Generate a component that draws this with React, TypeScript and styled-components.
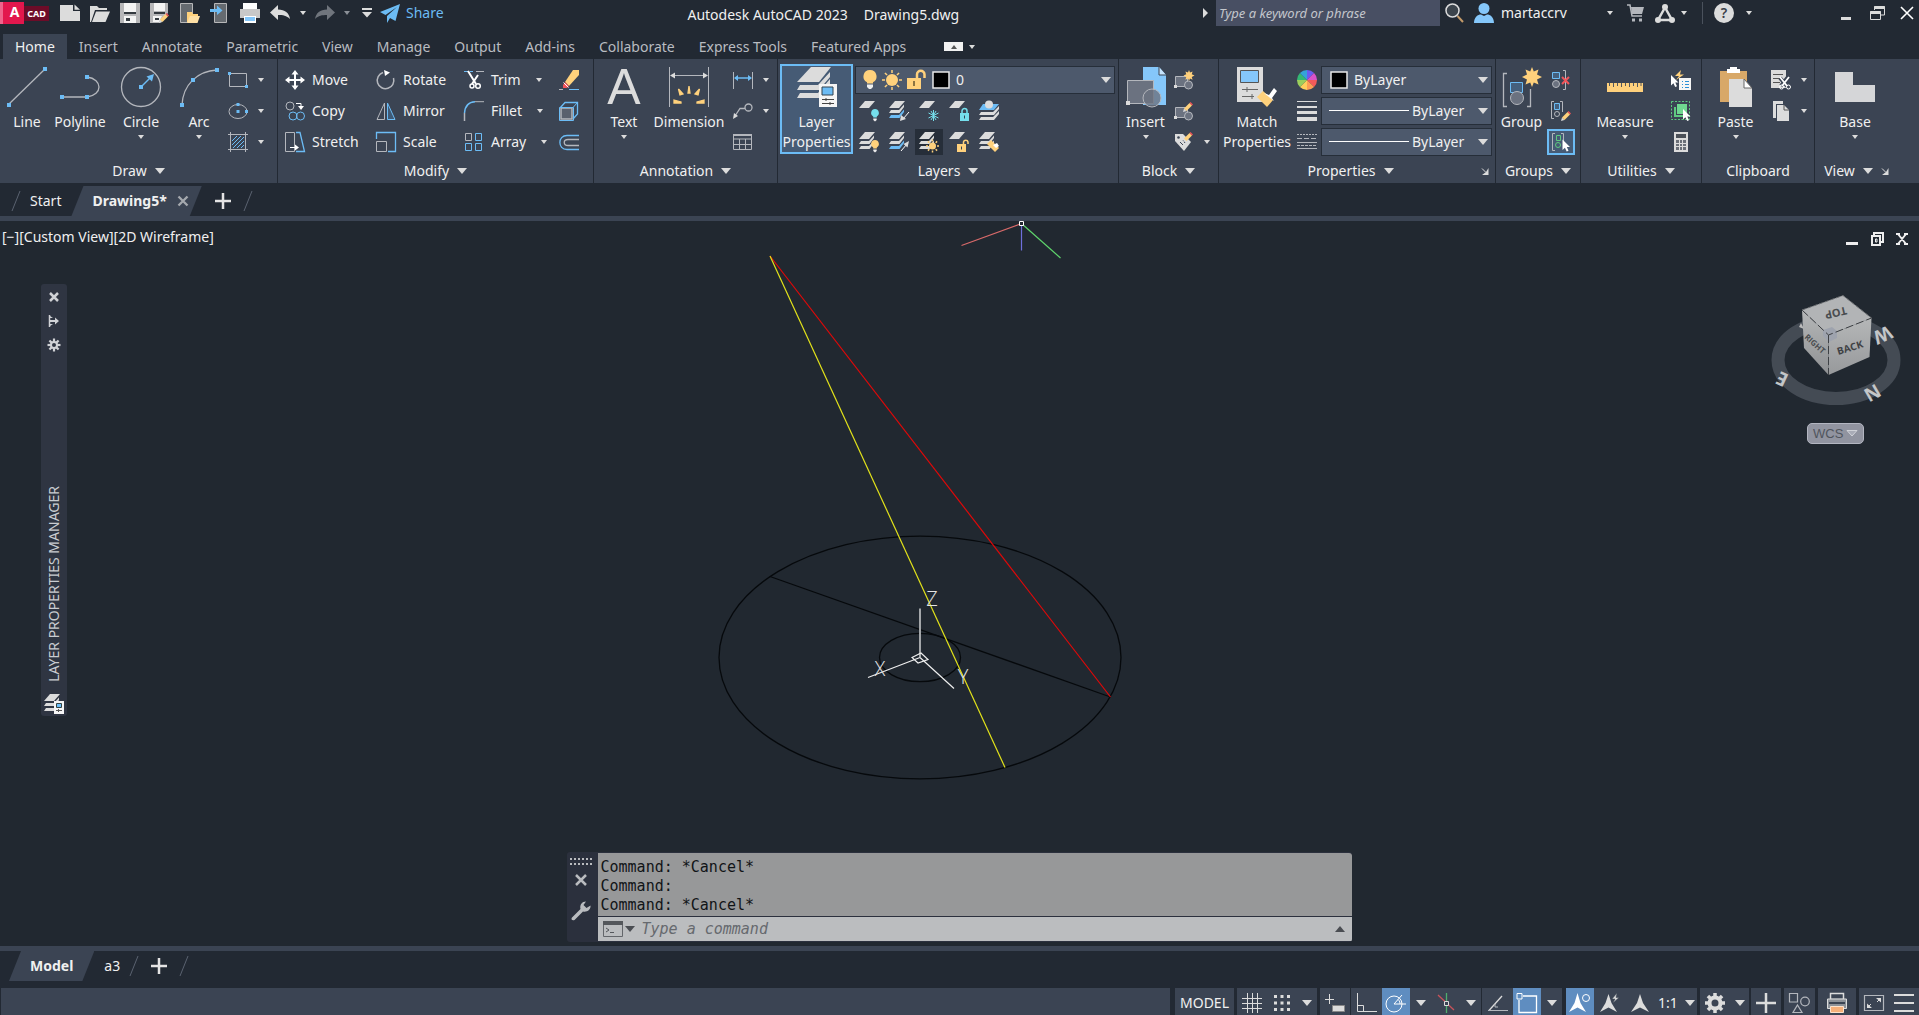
import React from 'react';
import styled, { createGlobalStyle, css } from 'styled-components';

const c = {
  bg: '#222933',
  canvas: '#212830',
  panel: '#3b4453',
  field: '#4d596c',
  text: '#f0f0f0',
  dim: '#b9bcc1',
  light: '#dcdcdc',
  line: '#b4b7bd',
  blue: '#6cbcf5',
  sky: '#85c7fa',
  yellow: '#ffd17c',
  cyan: '#75dfec',
  red: '#f0555a',
  green: '#5ecb80',
  orange: '#f7b07a',
  active: '#5f8dc0',
};

const GlobalStyle = createGlobalStyle`
  * { box-sizing: border-box; }
  body { margin: 0; background: ${c.bg}; }
  body, button, input, select { font: 14px/20px "Noto Sans", "Open Sans", sans-serif; color: ${c.text}; }
  button { margin: 0; padding: 0; border: 0; background: none; cursor: pointer; white-space: nowrap; }
  svg { display: block; flex: none; overflow: visible; }
`;

/* ---------- icons ---------- */

const Sun = ({ x = 10, y = 10, r = 4, l = 7, w = 2 }) => (
  <g>
    <circle cx={x} cy={y} r={r} fill={c.yellow} />
    {[0, 45, 90, 135, 180, 225, 270, 315].map((a) => (
      <path key={a} d={`M${x} ${y - r - 1}V${y - l}`} stroke={c.yellow} strokeWidth={w} transform={`rotate(${a} ${x} ${y})`} />
    ))}
  </g>
);
const Star = ({ x = 0, y = 0, s = 1 }) => (
  <path
    transform={`translate(${x} ${y}) scale(${s})`}
    fill={c.yellow}
    d="M0-10L1.8-5.5 6.500-7.500 5-2.500 10 0 5 2.500 6.500 7.500 1.8 5.5 0 10-1.8 5.5-6.500 7.500-5 2.500-10 0-5-2.500-6.500-7.500-1.8-5.5Z"
  />
);
const Pencil = ({ x = 0, y = 0 }) => (
  <g transform={`translate(${x} ${y})`}>
    <path d="M0 10L1 6.500 3.500 9Z" fill={c.light} />
    <path d="M1 6.500L6.500 1 9 3.500 3.500 9Z" fill={c.yellow} />
    <path d="M6.500 1L7.500 0 10 2.500 9 3.500Z" fill={c.red} />
  </g>
);
const Cursor = ({ x = 0, y = 0 }) => (
  <path transform={`translate(${x} ${y})`} d="M0 0V10.500L2.400 8.300 4.200 12 6 11.200 4.300 7.600H7.500Z" fill="#fff" />
);
const Sheet = ({ x = 0, y = 0, f = c.light }) => (
  <path transform={`translate(${x} ${y})`} d="M6 0H16L10 7H0Z" fill={f} />
);
const Stack = ({ last = c.light }) => (
  <g>
    <path d="M6 0H16L10 7H0Z" fill={c.light} />
    <path d="M2 9H10L15 3.500V6L10.500 12H0Z" fill={c.light} />
    <path d="M2 14H10L15 8.500V11L10.500 17H0Z" fill={last} />
  </g>
);
const Bulb = ({ x = 0, y = 0, f = c.yellow }) => (
  <g transform={`translate(${x} ${y})`}>
    <path d="M4 0A4 4 0 0 1 5.800 7.500V8.500H2.200V7.500A4 4 0 0 1 4 0Z" fill={f} />
    <path d="M2.300 9.500H5.700V11L4 12.500 2.300 11Z" fill="#eee" />
  </g>
);
const Padlock = ({ x = 0, y = 0, f = c.cyan, open = false }) => (
  <g transform={`translate(${x} ${y})`}>
    <path d={open ? 'M6.500 5V3A2.300 2.300 0 0 1 11 3V5' : 'M2 5V3A2.500 2.500 0 0 1 7 3V5'} fill="none" stroke={f} strokeWidth="1.500" />
    <path d="M0 5H9V13H0Z" fill={f} />
    <path d="M4.500 7.500V10.500" stroke="#345" />
  </g>
);
const Handle = ({ p }: { p: number[][] }) => (
  <>
    {p.map(([x, y], i) => (
      <rect key={i} x={x - 2} y={y - 2} width="4" height="4" fill={c.blue} />
    ))}
  </>
);
const Block = () => (
  <g stroke={c.line} fill="#6b7280">
    <path d="M1.500 6.500H13.500V16.500H1.500Z" />
    <circle cx="14.500" cy="15" r="4" />
    <path d="M0 15H3V18H0Z" fill={c.light} stroke="none" />
  </g>
);

const S = (w: number, h: number, body: React.ReactNode) => () => (
  <svg width={w} height={h} viewBox={`0 0 ${w} ${h}`} fill="none" aria-hidden="true">
    {body}
  </svg>
);

const I = {
  fresh: S(20, 20, <path d="M0 2H13V8H20V18H0ZM14.500 1.500L20 6.800H14.500Z" fill={c.light} />),
  open: S(20, 20, <g fill={c.light}><path d="M0 19V3H7L9 5H17V7H5L1 19Z" /><path d="M6 8.500H20L15.500 19H2Z" /></g>),
  save: S(20, 20, <g><path d="M0 0H20V20H0Z" fill="#b7b7b9" /><path d="M4 0H16V9H4Z" fill="#f4f4f4" /><path d="M4 13H16V20H4Z" fill="#f4f4f4" /><path d="M4 9H16V11H4ZM6 15H10V18H6Z" fill="#33393f" /></g>),
  saveAs: S(20, 20, <g><path d="M0 0H18V10L10 20H0Z" fill="#b7b7b9" /><path d="M4 0H15V8H4Z" fill="#f4f4f4" /><path d="M3 13H12L9 19H3Z" fill="#f4f4f4" /><path d="M4 9H15V11H4ZM5 15H9V17H5Z" fill="#33393f" /><Pencil x={9} y={10} /></g>),
  mobileOpen: S(20, 20, <g><path d="M.500 .500H12.500V19.500H.500Z" fill="#656a70" stroke="#b7b7b9" /><path d="M7 9H12L13 11H18V19H7Z" fill={c.yellow} /><path d="M10 13H20L17.500 20H7Z" fill="#ffe0a5" /></g>),
  mobileSave: S(20, 20, <g><path d="M4.500 .500H16.500V19.500H4.500Z" fill="#656a70" stroke="#b7b7b9" /><path d="M0 6H7V2.500L12.500 7.500 7 12V9H0Z" fill={c.blue} /></g>),
  print: S(20, 20, <g><path d="M3 0H17V6H3Z" fill="#fff" /><path d="M0 6H20V15H0Z" fill="#c8c8c8" /><path d="M4 13H16V20H4Z" fill="#fff" /><path d="M5 14H15V18H5Z" fill={c.sky} /></g>),
  undo: S(20, 16, <path d="M8 0V4.500C15 4.500 19 8 20 14 16.500 10.500 13 10 8 10V15L0 7.500Z" fill={c.light} />),
  redo: S(20, 16, <path d="M12 0V4.500C5 4.500 1 8 0 14 3.500 10.500 7 10 12 10V15L20 7.500Z" fill="#70757d" />),
  qat: S(10, 10, <path d="M0 0H10V2H0ZM0 4H10L5 9.500Z" fill={c.light} />),
  plane: S(20, 19, <path d="M20 0L0 8 5.500 11 17 3 7 12 7 19 10 14 15.500 17Z" fill={c.blue} />),
  playR: S(5, 10, <path d="M0 0L5 5 0 10Z" fill={c.light} />),
  search: S(20, 20, <g><circle cx="7.500" cy="7.500" r="6.500" fill="#3c444c" stroke={c.light} strokeWidth="1.500" /><path d="M12.500 13L18 19" stroke="#c49a6a" strokeWidth="2" /></g>),
  user: S(20, 20, <g fill={c.sky}><circle cx="10" cy="5.500" r="5.500" /><path d="M0 20C0 14 4 11.500 7 11.500L10 13 13 11.500C16 11.500 20 14 20 20Z" /></g>),
  cart: S(17, 18, <g><path d="M0 1H3L5 12H15" stroke={c.line} strokeWidth="1.500" /><path d="M4 3H17L15 10H5Z" fill={c.line} /><path d="M5 14.500H8V17.500H5ZM12 14.500H15V17.500H12Z" fill={c.line} /></g>),
  autodesk: S(20, 19, <g><path d="M10 3.500L3 16H17Z" stroke={c.light} strokeWidth="2.500" /><circle cx="10" cy="3" r="3" fill={c.light} /><circle cx="3" cy="16" r="3" fill={c.light} /><circle cx="17" cy="16" r="3" fill={c.light} /></g>),
  minimize: S(14, 14, <path d="M2 11H12V14H2Z" fill={c.light} />),
  restore: S(16, 14, <g stroke={c.light}><path d="M4.500 4V.500H14.500V9H11" /><path d="M4.500 1.500H14.500" strokeWidth="3" /><path d="M.500 5.500H10.500V13.500H.500Z" /><path d="M.500 6.500H10.500" strokeWidth="3" /></g>),
  close: S(14, 14, <path d="M1 1L13 13M13 1L1 13" stroke="#fff" strokeWidth="1.600" />),

  line: S(40, 40, <g><path d="M1 38L38 2" stroke={c.line} strokeWidth="1.300" /><Handle p={[[2, 38], [38, 2]]} /></g>),
  polyline: S(40, 40, <g><path d="M2 30H27C43 28 43 12 27 10" stroke={c.line} strokeWidth="1.300" /><Handle p={[[2, 30], [27, 30], [27, 10]]} /></g>),
  circle: S(40, 40, <g><circle cx="20" cy="20" r="19.500" stroke={c.line} strokeWidth="1.300" /><path d="M20 20L31 9" stroke={c.blue} strokeWidth="1.500" /><path d="M33 7L25.500 9.500 31 14.500Z" fill={c.blue} /><Handle p={[[20, 20]]} /></g>),
  arc: S(40, 40, <g><path d="M3 38C4 18 18 4 38 3" stroke={c.line} strokeWidth="1.300" /><Handle p={[[3, 38], [14, 13], [38, 3]]} /></g>),
  rect: S(20, 20, <g><path d="M1.500 3.500H18.500V16.500H1.500Z" stroke={c.line} /><path d="M0 2H3V5H0ZM17 15H20V18H17Z" fill={c.blue} /></g>),
  ellipse: S(20, 20, <g><ellipse cx="10" cy="10.500" rx="9" ry="7" stroke={c.line} /><path d="M8.500 2H11.500V5H8.500ZM8.500 9H11.500V12H8.500ZM17 9H20V12H17Z" fill={c.blue} /></g>),
  hatch: S(20, 20, <g><path d="M2.500 0V20M17.500 0V20M0 2.500H20M0 17.500H20" stroke={c.line} /><path d="M4 9L9 4M4 13L13 4M5 16L16 5M9 16L16 9M13 16L16 13" stroke={c.blue} /></g>),

  move: S(20, 20, <path d="M10 0L13.500 4.500H11V9H15.500V6.500L20 10 15.500 13.500V11H11V15.500H13.500L10 20 6.500 15.500H9V11H4.500V13.500L0 10 4.500 6.500V9H9V4.500H6.500Z" fill="#fff" />),
  copy: S(20, 20, <g><circle cx="5" cy="5" r="4" stroke={c.line} /><path d="M11 2.500H16V5" stroke="#fff" /><path d="M13 5H19L16 9Z" fill="#fff" /><circle cx="8" cy="15" r="4" stroke={c.blue} /><circle cx="15.500" cy="15" r="4" stroke={c.blue} /></g>),
  stretch: S(20, 20, <g><path d="M.500 .500H9.500V19.500H.500Z" stroke={c.line} /><path d="M11 .500H15L19.500 19.500H11" stroke={c.blue} strokeWidth="1.300" /><path d="M5 15.500H11" stroke="#fff" /><path d="M10 12.500L14 15.500 10 18.500Z" fill="#fff" /></g>),
  rotate: S(20, 20, <g><path d="M7 2.500A8.300 8.300 0 1 0 17.500 8" stroke={c.line} strokeWidth="1.500" /><path d="M8 0L14 2.500 9 6Z" fill="#fff" /></g>),
  mirror: S(20, 20, <g><path d="M8.500 2V18.500H1Z" stroke={c.line} /><path d="M11.500 2V18.500H19Z" stroke={c.blue} fill="#3f5a76" /></g>),
  scale: S(20, 20, <g><path d="M.500 7V.500H19.500V19.500H12" stroke={c.blue} strokeWidth="1.300" /><path d="M.500 9.500H10.500V19.500H.500Z" stroke={c.line} /></g>),
  trim: S(20, 20, <g><path d="M0 1.500H4M6 1.500H9" stroke={c.blue} /><path d="M12 1.500H20" stroke={c.line} /><path d="M4 1L12 14M14 5L8 14" stroke="#fff" strokeWidth="2" /><circle cx="8" cy="16" r="2" stroke="#fff" strokeWidth="1.500" /><circle cx="14" cy="16" r="2.300" stroke="#fff" strokeWidth="1.500" /></g>),
  fillet: S(20, 20, <g><path d="M.500 20V12" stroke={c.line} strokeWidth="1.500" /><path d="M.500 12C1 5 5 1 11 .700" stroke={c.blue} strokeWidth="1.500" /><path d="M11 .700H20" stroke={c.line} /></g>),
  array: S(20, 20, <g><path d="M1.500 1.500H7.500V8.500H1.500Z" stroke={c.line} /><path d="M11.500 1.500H17.500V8.500H11.500ZM1.500 11.500H7.500V18.500H1.500ZM11.500 11.500H17.500V18.500H11.500Z" stroke={c.blue} /></g>),
  erase: S(20, 20, <g><path d="M14 0H20V5L10 16 6 12Z" fill={c.yellow} /><path d="M6 12L10 16 8 18H4V15Z" fill={c.red} /><path d="M4.500 12.500L9.500 17.500" stroke="#fff" /><path d="M0 19.500H4" stroke={c.line} /><path d="M10 19.500H20" stroke={c.blue} /></g>),
  explode: S(20, 20, <g><path d="M1 7L6 1.500H18.500V13L14 18" stroke={c.blue} strokeWidth="1.300" /><path d="M2 7H13V18H2Z" fill="#59606d" stroke={c.line} strokeWidth="1.500" /><path d="M.500 6.500H14.500V19.500H.500Z" stroke={c.blue} /><path d="M14 6.500L18.500 1.500" stroke={c.blue} /></g>),
  offset: S(20, 20, <g><path d="M20 3.500H8C-1.500 3.500-1.500 17.500 8 17.500H20" stroke={c.blue} strokeWidth="1.300" /><path d="M20 7.500H9C4 7.500 4 13.500 9 13.500H20" stroke={c.line} strokeWidth="1.300" /></g>),

  dimension: S(40, 40, <g><path d="M.500 0V40M39.500 0V40M4 8.500H36" stroke={c.line} /><path d="M1 8.500L6 5.500V11.500ZM39 8.500L34 5.500V11.500Z" fill={c.light} /><path d="M19 26L20 19 21 26ZM11 28L9.500 22 14 27ZM29 28L30.500 22 26 27ZM5 36V33L12 35V36ZM35 36V33L28 35V36Z" fill={c.yellow} stroke={c.yellow} strokeWidth="1.300" /></g>),
  linear: S(20, 20, <g><path d="M.500 2V19M19.500 2V19" stroke={c.line} /><path d="M2 8H18" stroke={c.blue} strokeWidth="1.500" /><path d="M1 8L5 5V11ZM19 8L15 5V11Z" fill={c.blue} /></g>),
  leader: S(20, 20, <g><path d="M2 15L7 7.500H12" stroke={c.line} strokeWidth="1.300" /><circle cx="15.500" cy="6.500" r="3.500" stroke={c.line} strokeWidth="1.300" /><path d="M0 18L1 12 5 15Z" fill={c.light} /></g>),
  table: S(20, 20, <g><path d="M.500 2.500H18.500V17.500H.500ZM0 7H19M0 12.500H19M6.500 7V18M12.500 7V18" stroke={c.line} /><path d="M0 2H19V4H0Z" fill={c.line} /></g>),

  layerProps: S(40, 40, <g><path d="M14 0H34L22 15H0Z" fill={c.light} /><path d="M3 18H21L33 5V10L22 23H0ZM3 26H21L33 12V17L23 31H0Z" fill={c.light} /><path d="M22 17H40V40H22Z" fill="#f5f5f5" /><path d="M25 20H36V28H25Z" fill={c.blue} stroke="#33424f" /><path d="M25 32.500H37M25 36.500H37M29 31V34M33 35V38" stroke="#444" /></g>),
  bulb: S(14, 20, <g><path d="M7 0A6.500 6.500 0 0 1 10 12.300V13.500H4V12.300A6.500 6.500 0 0 1 7 0Z" fill={c.yellow} /><path d="M4 14.500H10V17L8 19H6L4 17Z" fill="#eee" /></g>),
  sun: S(20, 20, <Sun r={6} l={10} w={1.5} />),
  unlock: S(19, 20, <g><path d="M10 8V4.500A3.500 3.500 0 0 1 17.500 4.500V8" stroke={c.yellow} strokeWidth="2.500" /><path d="M0 8H14V19H0Z" fill={c.yellow} /><path d="M7 11V16" stroke="#66542f" strokeWidth="1.500" /></g>),
  swatch: S(20, 20, <path d="M2 2H18V18H2Z" fill="#000" stroke="#e8e8e8" strokeWidth="1.500" />),
  layOff: S(20, 20, <g><Sheet /><Bulb x={12} y={8} f={c.cyan} /></g>),
  layIso: S(20, 20, <g><Stack last={c.blue} /><path d="M20 11L14 18" stroke="#fff" /><path d="M11 20L12 14 17 18Z" fill={c.light} /></g>),
  layFrz: S(20, 20, <g><Sheet /><path d="M14.500 9V20M9.500 12L19.500 17M9.500 17L19.500 12M12 10L17 19M17 10L12 19" stroke={c.cyan} /></g>),
  layLock: S(20, 20, <g><Sheet /><Padlock x={11} y={7} /></g>),
  layCur: S(20, 20, <g><path d="M4 3H20L15 9H0Z" fill={c.blue} /><circle cx="10" cy="3.500" r="4" fill={c.light} /><path d="M2 11H14L20 5V8L15 14H0ZM2 16H14L20 10V13L15 19H0Z" fill={c.light} /></g>),
  layOn: S(20, 20, <g><Stack /><Bulb x={12} y={8} /></g>),
  layUniso: S(20, 20, <g><Stack last={c.blue} /><path d="M12 19L18 12" stroke="#fff" /><path d="M20 9L14.500 12 18.500 15.500Z" fill={c.light} /></g>),
  layThaw: S(20, 20, <g><Stack /><Sun x={13.5} y={14} r={3.5} l={6.5} w={1.5} /></g>),
  layUnlock: S(20, 20, <g><Sheet /><Padlock x={8} y={7} f={c.yellow} open /></g>),
  layMatch: S(20, 20, <g><Stack /><path d="M8 12L12 8 20 16 16 20Z" fill={c.yellow} /><path d="M14 13L18 11 20 14 17 16Z" fill="#fff" /></g>),

  insert: S(40, 40, <g><path d="M17 0H33L40 8V38H17Z" fill={c.sky} /><path d="M33 0V8H40" fill="#c6e4fc" stroke={c.panel} /><path d="M1.500 13.500H27.500V36.500H1.500Z" fill="#6b7280" stroke={c.line} /><circle cx="26" cy="31" r="9" fill="#6b7280" fillOpacity=".8" stroke={c.line} /><path d="M0 34H4V38H0Z" fill={c.light} /></g>),
  blockNew: S(20, 20, <g><Block /><Star x={15} y={5.5} s={0.55} /></g>),
  blockEdit: S(20, 20, <g><Block /><Pencil x={9} y={1} /></g>),
  blockAttr: S(20, 20, <g><path d="M1 2H9L17 10 10 19 1 9Z" fill={c.light} /><circle cx="4.500" cy="5.500" r="1.300" fill={c.panel} /><path d="M6 10L9 13M9 8L11 11" stroke={c.panel} /><Pencil x={9} y={0} /></g>),

  match: S(40, 40, <g><path d="M0 0H26V35H0Z" fill={c.light} /><path d="M3.500 3.500H21.500V15.500H3.500Z" fill={c.sky} stroke="#555" /><path d="M5 22.500H21M5 29.500H17M10 20V25M15 27V32" stroke="#666" /><path d="M20 30L26 24 36 33 30 40Z" fill={c.yellow} /><path d="M27 26L32 28 37 21 40 24 35 31 37 34Z" fill="#fff" /></g>),
  wheel: S(20, 20, <g>{['#f25a5a', '#fd9e54', '#ffcf5c', '#9bcf5c', '#34b874', '#35a3d9', '#6a5cf0', '#d852c8'].map((f, i) => (<path key={f} d="M10 10V0A10 10 0 0 1 17.100 2.900Z" fill={f} transform={`rotate(${i * 45 + 90} 10 10)`} />))}</g>),
  weights: S(20, 20, <path d="M0 0H20V1H0ZM0 5H20V7H0ZM0 10H20V13H0ZM0 16H20V20H0Z" fill={c.light} />),
  types: S(20, 20, <g stroke={c.line}><path d="M0 2.500H20" strokeDasharray="2 1" /><path d="M0 6.500H20" strokeDasharray="5 2" /><path d="M0 10.500H20" /><path d="M0 13.500H20" strokeDasharray="3 1" /><path d="M0 16.500H20" /></g>),
  stroke: S(80, 1, <path d="M0 .500H80" stroke="#fff" />),

  group: S(40, 40, <g><path d="M5 6.500H1.500V39.500H5M25 39.500H28.500V22" stroke={c.line} strokeWidth="1.300" /><path d="M8.500 15.500H20.500V25.500H8.500Z" fill="#45607d" stroke={c.blue} /><circle cx="15" cy="31" r="6.500" fill="#6b7280" stroke={c.line} /><Star x={30} y={10} /></g>),
  ungroup: S(20, 20, <g><path d="M12 .500H14.500V19.500H12" stroke={c.line} /><path d="M1.500 2.500H8.500V8.500H1.500Z" stroke={c.blue} fill="#45607d" /><circle cx="5" cy="14" r="3.500" stroke={c.line} fill="#6b7280" /><path d="M11 7L18 14M18 7L11 14" stroke={c.red} strokeWidth="2" /></g>),
  groupEdit: S(20, 20, <g><path d="M3 .500H.500V17.500H3M9 .500H11.500V11" stroke={c.line} /><path d="M3.500 2.500H8.500V8.500H3.500Z" stroke={c.blue} fill="#45607d" /><circle cx="6" cy="13" r="2.500" stroke={c.line} /><Pencil x={10} y={10} /></g>),
  groupSel: S(20, 20, <g><path d="M4 1.500H1.500V18.500H4M10 1.500H12.500V9" stroke={c.line} /><path d="M5.500 3.500H9.500V8.500H5.500Z" stroke={c.green} /><circle cx="7" cy="13" r="2.500" stroke={c.green} /><Cursor x={11.5} y={7.5} /></g>),

  measure: S(40, 40, <g><path d="M2 16H38V25H2Z" fill={c.yellow} /><path d="M4.500 16V19M8.500 16V20M12.500 16V19M16.500 16V20M20.500 16V19M24.500 16V20M28.500 16V19M32.500 16V20M36 16V19" stroke="#54595f" /></g>),
  quickSel: S(20, 20, <g><path d="M10 0L4 6H8L5 10 13 4.500H9Z" fill={c.yellow} /><path d="M8 8H20V20H8Z" fill="#f5f5f5" /><path d="M11 11.500H12M14 11.500H18M11 14.500H12M14 14.500H18M11 17.500H12M14 17.500H18" stroke="#2b8fd6" /><Cursor y={5} /></g>),
  selAll: S(20, 20, <g><path d="M.500 .500H18.500V18.500H.500Z" stroke={c.green} strokeDasharray="2 1.500" /><path d="M3 6H5V14H14V16H3Z" fill={c.green} /><path d="M6 3H16V13H6Z" fill="#6fd890" /><Cursor x={12} y={8} /></g>),
  calc: S(20, 20, <g><path d="M3 0H17V20H3Z" fill={c.light} /><path d="M5 2H15V6H5Z" fill="#4b5058" /><path d="M5 8H8V11H5ZM9 8H11V11H9ZM12 8H15V11H12ZM5 12H8V14H5ZM9 12H11V14H9ZM12 12H15V14H12ZM5 15H8V18H5ZM9 15H11V18H9ZM12 15H15V18H12Z" fill="#6b7078" /></g>),

  paste: S(32, 40, <g><path d="M0 4H27V35H0Z" fill="#d8a868" /><path d="M7 2H10V0H17V2H20V6H7Z" fill="#fff" /><path d="M9 12H24L32 21V40H9Z" fill={c.light} /><path d="M24 12V21H32Z" fill="#fff" stroke="#666" /></g>),
  cut: S(20, 20, <g><path d="M0 0H15V18H0Z" fill={c.light} /><path d="M2 4.500H12M2 8.500H9M2 12.500H9" stroke="#555" /><path d="M9 8L17 17M17 7L10 16" stroke={c.panel} strokeWidth="4" /><path d="M9 7L16 16M18 7L11 16" stroke="#fff" strokeWidth="1.800" /><circle cx="10.500" cy="17" r="2" stroke="#fff" /><circle cx="17.500" cy="17" r="2" stroke="#fff" /></g>),
  copyClip: S(20, 20, <g><path d="M2 0H12V3H5V17H2Z" fill={c.light} /><path d="M6 4H13L18 9V20H6Z" fill={c.light} /><path d="M13 4V9H18" stroke="#555" /></g>),
  base: S(40, 40, <path d="M0 5H18V18H40V35H0Z" fill="#d5d6d8" />),
  launcher: S(7, 7, <g><path d="M0 .500L4 4.500" stroke={c.light} /><path d="M6.500 0V7H0L4 4Z" fill={c.light} /></g>),

  plus: S(16, 16, <path d="M8 0V16M0 8H16" stroke="#e4e4e4" strokeWidth="2.500" />),
  tabX: S(10, 10, <path d="M.500 .500L9.500 9.500M9.500 .500L.500 9.500" stroke="#a5a9ae" strokeWidth="2.300" />),
  slash: S(8, 20, <path d="M8 0L0 20" stroke="#5a6270" />),

  vpMin: S(14, 14, <path d="M1 10H13V13H1Z" fill="#eee" />),
  vpMax: S(14, 14, <g stroke="#eee" strokeWidth="2"><path d="M4 3V1H13V10H11" /><path d="M2 4H10V13H2Z" /><path d="M5.500 7H7V10H5.500Z" strokeWidth="1" /></g>),
  vpX: S(14, 14, <path d="M3 2L11 12M11 2L3 12M1 2H5M9 2H13M1 12H5M9 12H13" stroke="#eee" strokeWidth="2" />),

  palX: S(12, 12, <path d="M2 2L10 10M10 2L2 10" stroke="#d0d2d6" strokeWidth="2.500" />),
  palPin: S(12, 12, <g><path d="M1.500 0V12" stroke="#d0d2d6" strokeWidth="1.500" /><path d="M2 6H8" stroke="#d0d2d6" strokeWidth="2" /><path d="M7 2.500L11 6 7 9.500ZM2 1L5 3H2ZM2 11L5 9H2Z" fill="#d0d2d6" /></g>),
  palGear: S(12, 12, <g stroke="#d0d2d6"><circle cx="6" cy="6" r="3" strokeWidth="2" />{[0, 45, 90, 135, 180, 225, 270, 315].map((a) => (<path key={a} d="M6 3V-.500" strokeWidth="2.200" transform={`rotate(${a} 6 6)`} />))}</g>),
  palLayers: S(20, 20, <g><Stack /><path d="M10 7H20V20H10Z" fill="#f5f5f5" /><path d="M12.500 9.500H17.500V13.500H12.500Z" fill={c.blue} stroke="#344" /><path d="M12 16.500H18M14.500 15V18" stroke="#555" /></g>),

  grip: S(22, 7, <path d="M0 1H22M0 6H22" stroke="#b9bbbf" strokeWidth="2" strokeDasharray="2 2" />),
  cmdX: S(12, 12, <path d="M1 1L11 11M11 1L1 11" stroke="#b9bbbf" strokeWidth="2.500" />),
  wrench: S(20, 20, <path d="M1 16.500L9.500 8C8.500 4 11 .500 15 .500L12.500 4 15.500 7 19.500 4.500C20 8.500 16 11.500 12 10.500L3.500 19C1.500 20-.500 18.500 1 16.500Z" fill="#b9bbbf" />),
  prompt: S(20, 16, <g><path d="M.500 .500H19.500V15.500H.500Z" stroke="#63666a" /><path d="M0 0H20V4H0Z" fill="#54575b" /><path d="M3 7L6 9 3 11M7 11.500H11" stroke="#54575b" /></g>),
  up: S(10, 6, <path d="M5 0L10 6H0Z" fill="#4a4d52" />),

  grid: S(20, 20, <path d="M5.500 0V20M10.500 0V20M15.500 0V20M0 5.500H20M0 10.500H20M0 15.500H20" stroke={c.light} />),
  snap: S(16, 16, <path d="M0 1.500H16M0 8H16M0 14.500H16" stroke={c.light} strokeWidth="3" strokeDasharray="3 3.500" />),
  dyn: S(20, 20, <g><path d="M4.500 1V11M0 6.500H9" stroke={c.light} /><path d="M7.500 12.500H19.500V18.500H7.500Z" fill={c.light} stroke="#888" /></g>),
  ortho: S(20, 20, <g><path d="M.500 0V18.500H20" stroke={c.light} /><path d="M.500 12.500H6.500V18" stroke={c.light} /></g>),
  polar: S(22, 20, <g stroke="#fff"><circle cx="9" cy="11" r="8" /><path d="M9 11L17 2M9 11H21M13 6.500C15 8 15 10 15 11" /></g>),
  iso: S(18, 20, <g><path d="M9.500 0V20" stroke="#4fae6e" strokeWidth="1.300" /><path d="M1 2L17 17" stroke="#c9535a" strokeWidth="1.300" /><path d="M7.500 8.500H11.500V12.500H7.500Z" fill={c.panel} stroke={c.light} /></g>),
  track: S(20, 20, <g><path d="M14 3L1 17.500" stroke={c.light} strokeWidth="1.300" /><path d="M7 11V14H10" stroke={c.line} /><path d="M0 17.500H20" stroke={c.line} /></g>),
  osnap: S(22, 22, <g stroke="#fff"><path d="M7 4H20.500V20.500H3V8" strokeWidth="1.300" /><path d="M1 1.500H6V7H1Z" /></g>),
  annoVis: S(22, 20, <g><path d="M8.500 0L11.500 10 17 19 8.500 14.500 0 19 5.500 10Z" fill="#fff" /><circle cx="17" cy="5" r="3.500" stroke="#fff" /></g>),
  annoAuto: S(20, 20, <g><path d="M8.500 1L11.500 10 17 19 8.500 14.500 0 19 5.500 10Z" fill={c.light} /><path d="M17 0L12 6H15L13 10 19 4.500H16Z" fill={c.light} stroke={c.panel} strokeWidth=".5" /></g>),
  anno: S(18, 20, <path d="M9 1L12 10 18 19 9 14.500 0 19 6 10Z" fill={c.light} />),
  gear: S(20, 20, <g stroke={c.light}><circle cx="10" cy="10" r="5.500" strokeWidth="4" />{[0, 45, 90, 135, 180, 225, 270, 315].map((a) => (<path key={a} d="M10 4V0" strokeWidth="3.500" transform={`rotate(${a} 10 10)`} />))}</g>),
  bigPlus: S(20, 20, <path d="M10 0V20M0 10H20" stroke={c.light} strokeWidth="2.500" />),
  shapes: S(21, 20, <g stroke={c.line} strokeWidth="1.200"><path d="M.500 .500H8.500V9H.500Z" /><circle cx="16" cy="8.500" r="4.300" /><path d="M8.500 12L13 19.500H4Z" /></g>),
  plot: S(20, 20, <g><path d="M3.500 .500H16.500V6.500H3.500Z" stroke={c.light} strokeWidth="1.500" /><path d="M.500 6H19.500V15.500H.500Z" fill="#8d9299" stroke={c.light} /><path d="M2 10H18" stroke={c.panel} strokeWidth="2" /><path d="M3.500 13.500H16.500V19.500H3.500Z" fill={c.orange} stroke="#fde3cd" /></g>),
  clean: S(20, 18, <g><path d="M.500 1.500H19.500V16.500H.500Z" stroke={c.line} strokeWidth="1.200" /><path d="M3 14V9.500L8 14ZM17 4V8.500L12 4Z" fill={c.light} /><path d="M4 13L7 10M16 5L13 8" stroke={c.light} /></g>),
  menu: S(20, 18, <path d="M0 1H20M0 9H20M0 17H20" stroke={c.light} strokeWidth="2" />),
};
type IconName = keyof typeof I;
const Icon = ({ n }: { n: IconName }) => {
  const C = I[n];
  return <C />;
};

/* ---------- shared parts ---------- */

const Caret = styled.span<{ $s?: number; $color?: string }>`
  flex: none;
  width: 0;
  height: 0;
  border-style: solid;
  border-color: ${(p) => p.$color || c.light} transparent transparent;
  border-width: ${(p) => (p.$s || 3) + 1}px ${(p) => p.$s || 3}px 0;
`;

const Shell = styled.div`
  display: flex;
  flex-direction: column;
  min-height: 100vh;
  min-width: 1280px;
  overflow: hidden;
`;

/* ---------- title bar ---------- */

const TitleBar = styled.header`
  display: flex;
  align-items: center;
  height: 34px;
  padding-bottom: 8px;
`;
const Logo = styled.div`
  display: flex;
  align-items: center;
  height: 26px;
  margin-right: 6px;
  font-weight: 700;
  color: #fff;
`;
const LogoA = styled.span`
  width: 24px;
  height: 22px;
  padding-left: 2px;
  border-left: 3px solid #f0648c;
  background: #e3174d;
  text-align: center;
`;
const LogoCad = styled.span`
  width: 25px;
  height: 15px;
  background: #6d0c28;
  font-size: 9px;
  line-height: 15px;
  text-align: center;
`;
const BarButton = styled.button<{ $w?: number }>`
  display: flex;
  align-items: center;
  justify-content: center;
  flex: none;
  width: ${(p) => p.$w || 30}px;
  height: 24px;
`;
const History2 = styled.div`
  display: flex;
  padding: 0 4px 0 5px;
`;
const Share = styled.button`
  display: flex;
  align-items: center;
  gap: 6px;
  color: ${c.blue};
`;
const AppTitle = styled.h1`
  flex: 1;
  display: flex;
  justify-content: center;
  gap: 16px;
  margin: 0;
  padding: 4px 0 0 4px;
  font-size: 14px;
  font-weight: 400;
  white-space: nowrap;
`;
const SearchBox = styled.input`
  width: 224px;
  height: 26px;
  margin: 0 2px 0 5px;
  padding: 0 3px;
  border: 0;
  background: #484f63;
  font-size: 13px;
  font-style: italic;
  &::placeholder { color: #c3c6cc; opacity: 1; }
`;
const UserButton = styled.button`
  display: flex;
  align-items: center;
  gap: 7px;
  width: 147px;
  padding: 0 2px 0 6px;
  & > :last-child { margin-left: auto; }
`;
const BarRule = styled.span`
  width: 1px;
  height: 22px;
  margin: 0 8px 0 9px;
  background: #4a515c;
`;
const WindowButtons = styled.div`
  display: flex;
  margin-left: 70px;
`;
const HelpMark = styled.span`
  width: 20px;
  height: 20px;
  border-radius: 50%;
  background: ${c.light};
  color: #3a4048;
  font-weight: 600;
  text-align: center;
`;

/* ---------- ribbon ---------- */

const RibbonTabs = styled.nav`
  display: flex;
  align-items: stretch;
  height: 25px;
  padding-left: 3px;
`;
const RibbonTab = styled.button<{ $on?: boolean }>`
  padding: 0 12px;
  line-height: 25px;
  color: ${(p) => (p.$on ? c.text : c.dim)};
  background: ${(p) => (p.$on ? c.panel : 'none')};
`;
const RibbonToggle = styled.button`
  display: flex;
  align-items: center;
  gap: 6px;
  margin-left: 26px;
`;
const ToggleMark = styled.span`
  display: flex;
  align-items: center;
  justify-content: center;
  width: 19px;
  height: 9px;
  background: #f2f2f2;
  &::after {
    content: '';
    border: solid transparent;
    border-width: 0 3px 4px;
    border-bottom-color: #555;
  }
`;
const Ribbon = styled.div`
  display: flex;
  height: 124px;
  background: ${c.panel};
`;
const Panel = styled.section<{ $w: number; $last?: boolean }>`
  display: flex;
  flex-direction: column;
  flex: none;
  width: ${(p) => p.$w}px;
  border-right: ${(p) => (p.$last ? 0 : 1)}px solid ${c.bg};
`;
const PanelBody = styled.div`
  display: flex;
  flex: 1;
`;
const LayerBody = styled(PanelBody)`
  padding-left: 2px;
`;
const PanelTitle = styled.div`
  display: flex;
  align-items: center;
  height: 24px;
`;
const PanelName = styled.button`
  display: flex;
  flex: 1;
  align-items: center;
  justify-content: center;
  gap: 8px;
`;
const Launcher = styled.button`
  width: 13px;
`;
const framed = css`
  border-color: ${c.blue};
  background: #465b75;
`;
const Large = styled.button<{ $w: number; $on?: boolean }>`
  display: flex;
  flex-direction: column;
  align-items: center;
  flex: none;
  width: ${(p) => p.$w}px;
  height: 90px;
  margin-top: 5px;
  padding-top: 1px;
  border: 2px solid transparent;
  ${(p) => p.$on && framed}
`;
const LargeLabel = styled.span`
  margin: 5px 0 3px;
  white-space: pre;
`;
const TextGlyph = styled.span`
  height: 40px;
  font: 50px/40px 'Liberation Sans', sans-serif;
  color: ${c.light};
`;
const Rows = styled.div<{ $pad?: number }>`
  display: grid;
  grid-template-rows: repeat(3, 31px);
  align-items: center;
  align-content: start;
  padding: 5px 0 0 ${(p) => p.$pad || 0}px;
`;
const Tool = styled.button<{ $w?: number }>`
  display: flex;
  align-items: center;
  gap: 7px;
  width: ${(p) => (p.$w ? p.$w + 'px' : 'auto')};
`;
const ToolCaret = styled(Caret)<{ $far?: boolean }>`
  margin-left: ${(p) => (p.$far ? 8 : 3)}px;
`;
const Columns = styled.div`
  display: flex;
  padding-left: 7px;
`;
const IconRow = styled.div`
  display: flex;
  gap: 2px;
`;
const Toggle = styled.button<{ $on?: boolean; $frame?: boolean }>`
  display: flex;
  align-items: center;
  justify-content: center;
  width: 28px;
  height: 26px;
  border: 2px solid transparent;
  background: ${(p) => (p.$on ? '#262e39' : 'none')};
  background-clip: border-box;
  ${(p) => p.$frame && framed}
`;
const Combo = styled.div<{ $w: number; $gap?: number }>`
  display: flex;
  align-items: center;
  gap: ${(p) => p.$gap || 3}px;
  width: ${(p) => p.$w}px;
  height: 28px;
  padding: 0 3px 0 7px;
  border: 1px solid #262e39;
  background: ${c.field};
`;
const Picker = styled.select`
  flex: 1;
  min-width: 0;
  padding: 0;
  border: 0;
  appearance: none;
  background: transparent;
`;
const PropRow = styled.div`
  display: flex;
  align-items: center;
  gap: 4px;
`;

/* ---------- tab strips ---------- */

const TabStrip = styled.nav<{ $bottom?: boolean }>`
  display: flex;
  align-items: center;
  height: ${(p) => (p.$bottom ? 42 : 38)}px;
  border: solid ${c.panel};
  border-width: ${(p) => (p.$bottom ? '5px 0 0' : '0 0 5px')};
  padding: ${(p) => (p.$bottom ? '0 0 7px 9px' : '3px 0 0 12px')};
`;
const SlantTab = styled.button<{ $tail?: boolean }>`
  display: flex;
  align-items: center;
  gap: 11px;
  height: 30px;
  padding: 0 ${(p) => (p.$tail ? 14 : 21)}px 0 21px;
  background: ${c.panel};
  clip-path: polygon(12px 0, 100% 0, calc(100% - 12px) 100%, 0 100%);
  font-weight: 700;
`;
const PlainTab = styled.button`
  padding: 0 10px;
`;
const AddTab = styled.button`
  padding: 0 13px;
`;

/* ---------- drawing area ---------- */

const Viewport = styled.main`
  position: relative;
  flex: 1;
  min-height: 500px;
  background: ${c.canvas};
`;
const Drawing = styled.svg`
  position: absolute;
  inset: 0;
  width: 100%;
  height: 100%;
`;
const ViewBar = styled.div`
  position: relative;
  display: flex;
  justify-content: space-between;
  padding: 6px 10px 0 2px;
`;
const ViewButtons = styled.div`
  display: flex;
  gap: 11px;
  padding-top: 4px;
`;
const Palette = styled.aside`
  position: absolute;
  left: 41px;
  top: 63px;
  display: flex;
  flex-direction: column;
  align-items: center;
  gap: 12px;
  width: 26px;
  height: 432px;
  padding: 7px 0 2px;
  border-radius: 3px;
  background: #2f3542;
`;
const PaletteName = styled.span`
  margin-top: auto;
  writing-mode: vertical-rl;
  transform: rotate(180deg);
  color: #c9ccd1;
`;
const Cube = styled.div`
  position: absolute;
  top: 49px;
  right: 0;
  width: 219px;
`;
const CubeText = styled.text<{ $s?: number }>`
  font: 700 ${(p) => p.$s || 11}px 'Open Sans', sans-serif;
  text-anchor: middle;
`;
const AxisText = styled.text`
  font: 300 20px 'Open Sans', sans-serif;
  fill: #e4e4e4;
  text-anchor: middle;
`;
const Wcs = styled.button`
  position: absolute;
  left: 107px;
  top: 153px;
  display: flex;
  align-items: center;
  justify-content: space-between;
  width: 57px;
  height: 21px;
  padding: 0 5px;
  border: 1px solid #b3b6c1;
  border-radius: 5px;
  background: #9194a0;
  color: #50545d;
  font: 13px/18px 'Liberation Sans', sans-serif;
`;
const CommandWindow = styled.section`
  position: absolute;
  left: 50%;
  bottom: 4px;
  display: flex;
  width: 785px;
  margin-left: -393px;
  border-radius: 3px;
  overflow: hidden;
  background: #2b303d;
`;
const CommandSide = styled.div`
  display: flex;
  flex-direction: column;
  align-items: center;
  gap: 9px;
  width: 31px;
  padding: 6px 2px 0 0;
  & > :last-child { margin-top: 6px; }
`;
const CommandMain = styled.div`
  flex: 1;
  padding: 1px 0;
  font: 15px/19px 'DejaVu Sans Mono', monospace;
  color: #111417;
`;
const History = styled.div`
  padding: 5px 3px 1px;
  border-radius: 0 3px 0 0;
  background: #979899;
`;
const CommandLine = styled.label`
  display: flex;
  align-items: center;
  gap: 2px;
  height: 24px;
  margin-top: 1px;
  padding: 0 7px 0 5px;
  background: #bbbdbf;
`;
const CommandInput = styled.input`
  flex: 1;
  height: 20px;
  padding: 0 5px;
  border: 0;
  background: transparent;
  font: italic 15px/20px 'DejaVu Sans Mono', monospace;
  color: #111417;
  &::placeholder { color: #66696e; opacity: 1; }
`;

/* ---------- status bar ---------- */

const StatusBar = styled.footer`
  display: flex;
  height: 27px;
  padding-left: 1px;
`;
const Pane = styled.div<{ $gap?: number; $grow?: boolean }>`
  display: flex;
  align-items: stretch;
  flex: ${(p) => (p.$grow ? 1 : 'none')};
  margin-right: ${(p) => p.$gap || 0}px;
  background: ${c.panel};
`;
const Cell = styled.button<{ $w: number; $on?: boolean }>`
  display: flex;
  align-items: center;
  justify-content: center;
  width: ${(p) => p.$w}px;
  padding-top: 3px;
  background: ${(p) => (p.$on ? c.active : 'none')};
`;

/* ---------- composition ---------- */

const Title = ({ name, caret = true, launch = false }: { name: string; caret?: boolean; launch?: boolean }) => (
  <PanelTitle>
    <PanelName>
      {name}
      {caret && <Caret $s={5} />}
    </PanelName>
    {launch && (
      <Launcher aria-label={`${name} settings`}>
        <Icon n="launcher" />
      </Launcher>
    )}
  </PanelTitle>
);
const Big = ({ icon, label, w, caret, on }: { icon: IconName; label: string; w: number; caret?: boolean; on?: boolean }) => (
  <Large $w={w} $on={on}>
    <Icon n={icon} />
    <LargeLabel>{label}</LargeLabel>
    {caret && <Caret />}
  </Large>
);
const Small = ({ icon, label, caret, w }: { icon: IconName; label?: string; caret?: boolean; w?: number }) => (
  <Tool $w={w} aria-label={label ? undefined : icon}>
    <Icon n={icon} />
    {label}
    {caret && <ToolCaret $far={!!label} />}
  </Tool>
);

const quick: IconName[] = ['fresh', 'open', 'save', 'saveAs', 'mobileOpen', 'mobileSave', 'print'];
const tabs = ['Home', 'Insert', 'Annotate', 'Parametric', 'View', 'Manage', 'Output', 'Add-ins', 'Collaborate', 'Express Tools', 'Featured Apps'];

const Header = () => (
  <TitleBar>
    <Logo>
      <LogoA>A</LogoA>
      <LogoCad>CAD</LogoCad>
    </Logo>
    {quick.map((n) => (
      <BarButton key={n} aria-label={n}>
        <Icon n={n} />
      </BarButton>
    ))}
    <History2>
      <BarButton $w={20} aria-label="undo"><Icon n="undo" /></BarButton>
      <BarButton $w={25} aria-label="undo list"><Caret /></BarButton>
      <BarButton $w={20} aria-label="redo"><Icon n="redo" /></BarButton>
      <BarButton $w={23} aria-label="redo list"><Caret $color="#8b9097" /></BarButton>
      <BarButton $w={18} aria-label="customize"><Icon n="qat" /></BarButton>
    </History2>
    <Share><Icon n="plane" />Share</Share>
    <AppTitle>
      <span>Autodesk AutoCAD 2023</span>
      <span>Drawing5.dwg</span>
    </AppTitle>
    <BarButton $w={12} aria-label="collapse search"><Icon n="playR" /></BarButton>
    <SearchBox placeholder="Type a keyword or phrase" aria-label="Search" />
    <BarButton $w={26} aria-label="search"><Icon n="search" /></BarButton>
    <UserButton><Icon n="user" />martaccrv<Caret /></UserButton>
    <BarButton $w={40} aria-label="store"><Icon n="cart" /></BarButton>
    <BarButton $w={20} aria-label="apps"><Icon n="autodesk" /></BarButton>
    <BarButton $w={18} aria-label="apps list"><Caret /></BarButton>
    <BarRule />
    <BarButton $w={26} aria-label="help"><HelpMark>?</HelpMark></BarButton>
    <BarButton $w={24} aria-label="help list"><Caret /></BarButton>
    <WindowButtons>
      <BarButton aria-label="minimize"><Icon n="minimize" /></BarButton>
      <BarButton $w={34} aria-label="restore"><Icon n="restore" /></BarButton>
      <BarButton $w={24} aria-label="close"><Icon n="close" /></BarButton>
    </WindowButtons>
  </TitleBar>
);

const DrawPanel = () => (
  <Panel $w={278}>
    <PanelBody>
      <Big icon="line" label="Line" w={54} />
      <Big icon="polyline" label="Polyline" w={52} />
      <Big icon="circle" label="Circle" w={70} caret />
      <Big icon="arc" label="Arc" w={46} caret />
      <Rows $pad={6}>
        <Small icon="rect" caret />
        <Small icon="ellipse" caret />
        <Small icon="hatch" caret />
      </Rows>
    </PanelBody>
    <Title name="Draw" />
  </Panel>
);

const modify: { w?: number; caret?: boolean; items: [IconName, string?][] }[] = [
  { w: 91, items: [['move', 'Move'], ['copy', 'Copy'], ['stretch', 'Stretch']] },
  { w: 88, items: [['rotate', 'Rotate'], ['mirror', 'Mirror'], ['scale', 'Scale']] },
  { w: 95, caret: true, items: [['trim', 'Trim'], ['fillet', 'Fillet'], ['array', 'Array']] },
  { items: [['erase'], ['explode'], ['offset']] },
];

const ModifyPanel = () => (
  <Panel $w={316}>
    <PanelBody>
      <Columns>
        {modify.map((col, i) => (
          <Rows key={i}>
            {col.items.map(([n, label]) => (
              <Small key={n} icon={n} label={label} w={col.w} caret={col.caret} />
            ))}
          </Rows>
        ))}
      </Columns>
    </PanelBody>
    <Title name="Modify" />
  </Panel>
);

const AnnotationPanel = () => (
  <Panel $w={184}>
    <PanelBody>
      <Large $w={60}>
        <TextGlyph aria-hidden="true">A</TextGlyph>
        <LargeLabel>Text</LargeLabel>
        <Caret />
      </Large>
      <Big icon="dimension" label="Dimension" w={70} />
      <Rows $pad={9}>
        <Small icon="linear" caret />
        <Small icon="leader" caret />
        <Small icon="table" />
      </Rows>
    </PanelBody>
    <Title name="Annotation" />
  </Panel>
);

const layerTools: IconName[][] = [
  ['layOff', 'layIso', 'layFrz', 'layLock', 'layCur'],
  ['layOn', 'layUniso', 'layThaw', 'layUnlock', 'layMatch'],
];

const LayerPanel = () => (
  <Panel $w={341}>
    <LayerBody>
      <Big icon="layerProps" label={'Layer\nProperties'} w={73} on />
      <Rows $pad={2}>
        <Combo $w={260} $gap={5}>
          <Icon n="bulb" />
          <Icon n="sun" />
          <Icon n="unlock" />
          <Icon n="swatch" />
          <Picker aria-label="Layer"><option>0</option></Picker>
          <Caret $s={5} />
        </Combo>
        {layerTools.map((row) => (
          <IconRow key={row[0]}>
            {row.map((n) => (
              <Toggle key={n} $on={n === 'layThaw'} aria-label={n}><Icon n={n} /></Toggle>
            ))}
          </IconRow>
        ))}
      </Rows>
    </LayerBody>
    <Title name="Layers" />
  </Panel>
);

const BlockPanel = () => (
  <Panel $w={100}>
    <PanelBody>
      <Big icon="insert" label="Insert" w={53} caret />
      <Rows $pad={2}>
        <Small icon="blockNew" />
        <Small icon="blockEdit" />
        <Small icon="blockAttr" caret />
      </Rows>
    </PanelBody>
    <Title name="Block" />
  </Panel>
);

const PropertiesPanel = () => (
  <Panel $w={277}>
    <PanelBody>
      <Big icon="match" label={'Match\nProperties'} w={76} />
      <Rows $pad={2}>
        <PropRow>
          <Icon n="wheel" />
          <Combo $w={171} $gap={5}>
            <Icon n="swatch" />
            <Picker aria-label="Object color"><option>ByLayer</option></Picker>
            <Caret $s={5} />
          </Combo>
        </PropRow>
        <PropRow>
          <Icon n="weights" />
          <Combo $w={171}>
            <Icon n="stroke" />
            <Picker aria-label="Lineweight"><option>ByLayer</option></Picker>
            <Caret $s={5} />
          </Combo>
        </PropRow>
        <PropRow>
          <Icon n="types" />
          <Combo $w={171}>
            <Icon n="stroke" />
            <Picker aria-label="Linetype"><option>ByLayer</option></Picker>
            <Caret $s={5} />
          </Combo>
        </PropRow>
      </Rows>
    </PanelBody>
    <Title name="Properties" launch />
  </Panel>
);

const OtherPanels = () => (
  <>
    <Panel $w={85}>
      <PanelBody>
        <Big icon="group" label="Group" w={51} />
        <Rows>
          <Toggle aria-label="Ungroup"><Icon n="ungroup" /></Toggle>
          <Toggle aria-label="Group edit"><Icon n="groupEdit" /></Toggle>
          <Toggle $frame aria-label="Group selection"><Icon n="groupSel" /></Toggle>
        </Rows>
      </PanelBody>
      <Title name="Groups" />
    </Panel>
    <Panel $w={121}>
      <PanelBody>
        <Big icon="measure" label="Measure" w={88} caret />
        <Rows $pad={2}>
          <Small icon="quickSel" />
          <Small icon="selAll" />
          <Small icon="calc" />
        </Rows>
      </PanelBody>
      <Title name="Utilities" />
    </Panel>
    <Panel $w={113}>
      <PanelBody>
        <Big icon="paste" label="Paste" w={67} caret />
        <Rows $pad={2}>
          <Small icon="cut" caret />
          <Small icon="copyClip" caret />
        </Rows>
      </PanelBody>
      <Title name="Clipboard" caret={false} />
    </Panel>
    <Panel $w={80} $last>
      <PanelBody>
        <Big icon="base" label="Base" w={80} caret />
      </PanelBody>
      <Title name="View" launch />
    </Panel>
  </>
);

const ModelSpace = () => (
  <Drawing viewBox="0 221 1919 725" aria-label="Drawing" fill="none">
    <g stroke="#06090c" strokeWidth="1.300">
      <ellipse cx="920" cy="657.500" rx="201" ry="121.400" />
      <ellipse cx="920" cy="657.500" rx="40.500" ry="24.200" />
      <path d="M770 576.500L1110.500 697" />
    </g>
    <path d="M770 256L1110.500 697" stroke="#e00808" strokeWidth="1.200" />
    <path d="M770 256L1005 767.500" stroke="#e2e21a" strokeWidth="1.200" />
    <path d="M920 608.500V657" stroke="#a4a7aa" strokeWidth="2" />
    <path d="M920 657.500L868 677.500M920 657.500L954 688.500M912 657.500L921 653 928 659.500 918 663Z" stroke="#eee" strokeWidth="1.200" />
    <AxisText x="880" y="676">X</AxisText>
    <AxisText x="963" y="684">Y</AxisText>
    <AxisText x="932" y="606">Z</AxisText>
    <path d="M1021.500 223.500L961.500 245.500" stroke="#d96a6a" strokeWidth="1.200" />
    <path d="M1021.500 223.500L1060.500 258" stroke="#5fd66c" strokeWidth="1.200" />
    <path d="M1021.500 225V250.500" stroke="#6f6fdc" strokeWidth="1.200" />
    <path d="M1019.500 221.500H1023.500V225.500H1019.500Z" fill={c.canvas} stroke="#fff" />
  </Drawing>
);

const ViewCube = () => (
  <Cube>
    <svg width="219" height="150" viewBox="0 0 219 150" fill="none" aria-label="View cube">
      <defs>
        <linearGradient id="left" x1="0" y1="0" x2="0" y2="1"><stop stopColor="#b5b7b8" /><stop offset="1" stopColor="#8f9193" /></linearGradient>
        <linearGradient id="right" x1="0" y1="0" x2="0" y2="1"><stop stopColor="#b5b7b8" /><stop offset="1" stopColor="#97999b" /></linearGradient>
      </defs>
      <ellipse cx="136" cy="90" rx="58" ry="38.500" stroke="#444b54" strokeWidth="13" />
      <path d="M101 53L104 59 99 57Z" fill="#bbb" />
      <path d="M102 40L143 25.500 171.500 48 128.500 65Z" fill="#b2b4b6" />
      <path d="M102 40L128.500 65V105L104 78Z" fill="url(#left)" />
      <path d="M128.500 65L171.500 48 169.500 87 128.500 105Z" fill="url(#right)" />
      <path d="M123 60L132 57 137 61V68L129 72 123 66Z" fill="#9ea3ae" />
      <path d="M102 40L128.500 65 171.500 48M128.500 65V105" stroke="#3d4044" strokeDasharray="8 3" />
      <path d="M102 40L143 25.500 171.500 48" stroke="#6a6d70" strokeDasharray="4 2" />
      <CubeText fill="#4a4d50" transform="translate(135 39) rotate(167)" $s={11}>TOP</CubeText>
      <CubeText fill="#4a4d50" transform="translate(113 76) rotate(42)" $s={8}>RIGHT</CubeText>
      <CubeText fill="#3f4245" transform="translate(151 81) rotate(-17)" $s={10}>BACK</CubeText>
      <CubeText fill="#c4c6c8" transform="translate(180 59) rotate(155)" $s={19}>W</CubeText>
      <CubeText fill="#c4c6c8" transform="translate(169 117) rotate(150)" $s={19}>N</CubeText>
      <CubeText fill="#c4c6c8" transform="translate(85 103) rotate(205)" $s={19}>E</CubeText>
    </svg>
    <Wcs>
      WCS
      <svg width="12" height="7" viewBox="0 0 12 7"><path d="M1 .500H11L6 6Z" fill="#a9acb7" stroke="#d0d2d8" /></svg>
    </Wcs>
  </Cube>
);

const DropCaret = () => <Caret $s={5} />;

export default function App() {
  return (
    <Shell>
      <GlobalStyle />
      <Header />
      <RibbonTabs>
        {tabs.map((t, i) => (
          <RibbonTab key={t} $on={i === 0}>{t}</RibbonTab>
        ))}
        <RibbonToggle aria-label="Minimize ribbon"><ToggleMark /><Caret /></RibbonToggle>
      </RibbonTabs>
      <Ribbon>
        <DrawPanel />
        <ModifyPanel />
        <AnnotationPanel />
        <LayerPanel />
        <BlockPanel />
        <PropertiesPanel />
        <OtherPanels />
      </Ribbon>
      <TabStrip>
        <Icon n="slash" />
        <PlainTab>Start</PlainTab>
        <SlantTab $tail>Drawing5*<Icon n="tabX" /></SlantTab>
        <AddTab aria-label="New drawing"><Icon n="plus" /></AddTab>
        <Icon n="slash" />
      </TabStrip>
      <Viewport>
        <ModelSpace />
        <ViewBar>
          <span>[−][Custom View][2D Wireframe]</span>
          <ViewButtons>
            <button aria-label="Minimize view"><Icon n="vpMin" /></button>
            <button aria-label="Restore view"><Icon n="vpMax" /></button>
            <button aria-label="Close view"><Icon n="vpX" /></button>
          </ViewButtons>
        </ViewBar>
        <Palette>
          <button aria-label="Close palette"><Icon n="palX" /></button>
          <button aria-label="Auto-hide"><Icon n="palPin" /></button>
          <button aria-label="Palette settings"><Icon n="palGear" /></button>
          <PaletteName>LAYER PROPERTIES MANAGER</PaletteName>
          <Icon n="palLayers" />
        </Palette>
        <ViewCube />
        <CommandWindow>
          <CommandSide>
            <Icon n="grip" />
            <button aria-label="Close command line"><Icon n="cmdX" /></button>
            <button aria-label="Customize"><Icon n="wrench" /></button>
          </CommandSide>
          <CommandMain>
            <History>
              <div>Command: *Cancel*</div>
              <div>Command:</div>
              <div>Command: *Cancel*</div>
            </History>
            <CommandLine>
              <Icon n="prompt" />
              <Caret $s={5} $color="#4a4d52" />
              <CommandInput placeholder="Type a command" aria-label="Command" />
              <Icon n="up" />
            </CommandLine>
          </CommandMain>
        </CommandWindow>
      </Viewport>
      <TabStrip $bottom>
        <SlantTab>Model</SlantTab>
        <PlainTab>a3</PlainTab>
        <Icon n="slash" />
        <AddTab aria-label="New layout"><Icon n="plus" /></AddTab>
        <Icon n="slash" />
      </TabStrip>
      <StatusBar>
        <Pane $grow $gap={5} />
        <Pane $gap={3}><Cell $w={59}>MODEL</Cell></Pane>
        <Pane $gap={3}>
          <Cell $w={30} aria-label="Grid"><Icon n="grid" /></Cell>
          <Cell $w={30} aria-label="Snap"><Icon n="snap" /></Cell>
          <Cell $w={20} aria-label="Snap options"><DropCaret /></Cell>
        </Pane>
        <Pane $gap={1}><Cell $w={30} aria-label="Dynamic input"><Icon n="dyn" /></Cell></Pane>
        <Pane $gap={1}>
          <Cell $w={31} aria-label="Ortho"><Icon n="ortho" /></Cell>
          <Cell $w={28} $on aria-label="Polar"><Icon n="polar" /></Cell>
          <Cell $w={22} aria-label="Polar options"><DropCaret /></Cell>
          <Cell $w={28} aria-label="Isodraft"><Icon n="iso" /></Cell>
          <Cell $w={21} aria-label="Isodraft options"><DropCaret /></Cell>
        </Pane>
        <Pane $gap={4}>
          <Cell $w={31} aria-label="Object tracking"><Icon n="track" /></Cell>
          <Cell $w={28} $on aria-label="Object snap"><Icon n="osnap" /></Cell>
          <Cell $w={21} aria-label="Object snap options"><DropCaret /></Cell>
        </Pane>
        <Pane $gap={3}>
          <Cell $w={28} $on aria-label="Annotation visibility"><Icon n="annoVis" /></Cell>
          <Cell $w={32} aria-label="Annotation autoscale"><Icon n="annoAuto" /></Cell>
          <Cell $w={28} aria-label="Annotation scale"><Icon n="anno" /></Cell>
          <Cell $w={28}>1:1</Cell>
          <Cell $w={15} aria-label="Scale options"><DropCaret /></Cell>
        </Pane>
        <Pane $gap={2}>
          <Cell $w={30} aria-label="Workspace"><Icon n="gear" /></Cell>
          <Cell $w={19} aria-label="Workspace options"><DropCaret /></Cell>
        </Pane>
        <Pane $gap={3}><Cell $w={30} aria-label="Monitor"><Icon n="bigPlus" /></Cell></Pane>
        <Pane $gap={3}><Cell $w={31} aria-label="Isolate objects"><Icon n="shapes" /></Cell></Pane>
        <Pane $gap={3}><Cell $w={38} aria-label="Plot"><Icon n="plot" /></Cell></Pane>
        <Pane>
          <Cell $w={30} aria-label="Clean screen"><Icon n="clean" /></Cell>
          <Cell $w={30} aria-label="Customization"><Icon n="menu" /></Cell>
        </Pane>
      </StatusBar>
    </Shell>
  );
}
